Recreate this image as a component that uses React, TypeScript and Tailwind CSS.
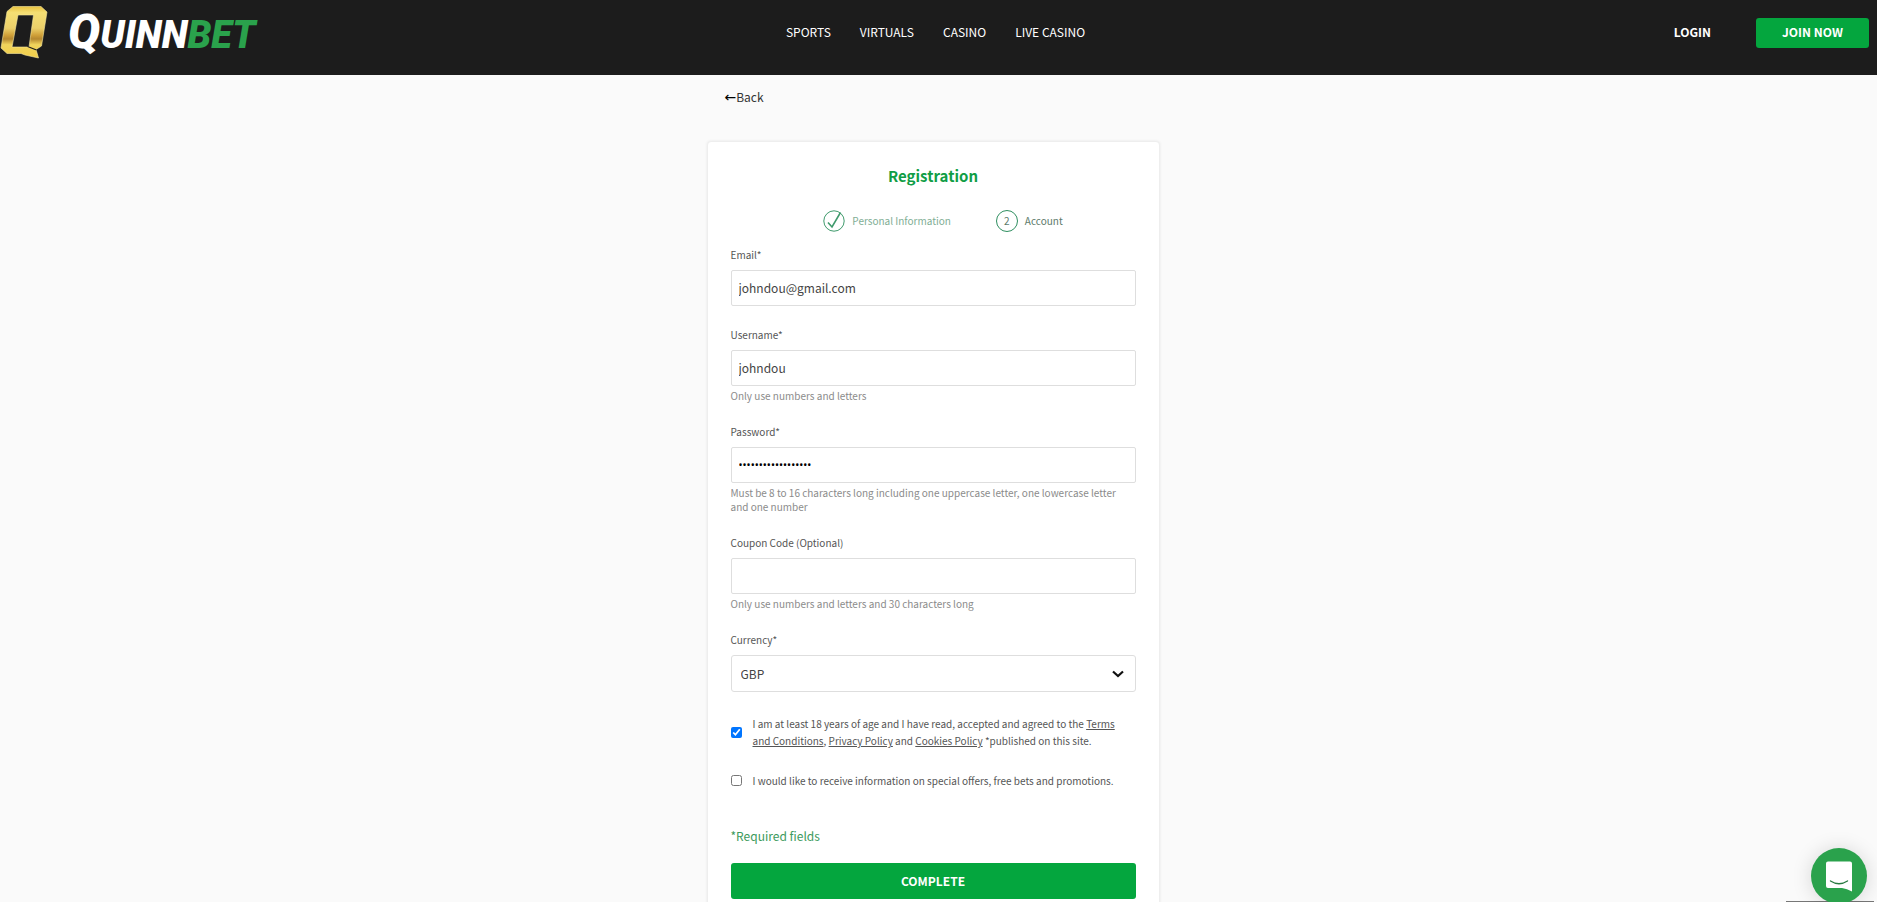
import React from "react";

const navItems = ["SPORTS", "VIRTUALS", "CASINO", "LIVE CASINO"];

function Emblem() {
  return (
    <svg viewBox="0 0 48 54" className="h-[54px] w-12" aria-hidden="true">
      <defs>
        <linearGradient id="gold" x1="0" y1="0" x2="0" y2="1">
          <stop offset="0" stopColor="#e9c23f" />
          <stop offset="0.12" stopColor="#f5df74" />
          <stop offset="0.42" stopColor="#ecd06a" />
          <stop offset="0.56" stopColor="#cf9f38" />
          <stop offset="0.63" stopColor="#b58830" />
          <stop offset="0.74" stopColor="#f0d35c" />
          <stop offset="1" stopColor="#f2cf4a" />
        </linearGradient>
      </defs>
      <path
        fill="url(#gold)"
        stroke="#f8e9a0"
        strokeWidth="0.6"
        fillRule="evenodd"
        d="M13 1.500H41L47 7L41.500 41L36 44.500L38.500 53L25 50L21 48.500H7L1 43L7 6.500ZM18 10L12 42H26L29 42L33.500 10Z"
      />
      <path d="M27.500 41.500L36.500 45" stroke="#1c1c1c" strokeWidth="1.2" />
    </svg>
  );
}

function Logo() {
  return (
    <a href="#" className="flex items-start gap-5" aria-label="QuinnBet">
      <Emblem />
      <span className="font-[Roboto,sans-serif] text-[38px] leading-[54px] font-black whitespace-nowrap text-white italic">
        <span className="text-[48px]">Q</span>UINN
        <span className="text-[#2aa24c]">BET</span>
      </span>
    </a>
  );
}

function Header() {
  return (
    <header className="grid h-[75px] grid-cols-[1fr_auto_1fr] items-start bg-[#1c1c1c] text-[12px] text-white">
      <div className="pt-[5px]">
        <Logo />
      </div>
      <nav className="mr-1.5 flex gap-[29px] pt-[22px] leading-5">
        {navItems.map((item) => (
          <a key={item} href="#">
            {item}
          </a>
        ))}
      </nav>
      <div className="flex items-center justify-end gap-[45px] pt-[18px] pr-2 font-bold">
        <button type="button" className="pb-0.5">
          LOGIN
        </button>
        <button type="button" className="h-[30px] w-[113px] rounded-[3px] bg-[#04a63e] pb-0.5">
          JOIN NOW
        </button>
      </div>
    </header>
  );
}

const inputClass =
  "block h-9 w-full rounded-[2px] border border-[#dedede] bg-white px-[7px] pb-0.5 text-[12px] text-[#444] outline-none";

function Field({
  id,
  label,
  hint,
  children,
}: {
  id: string;
  label: string;
  hint?: string;
  children: React.ReactNode;
}) {
  return (
    <div>
      <label htmlFor={id} className="mb-2 block">
        {label}
      </label>
      {children}
      {hint && <p className="mt-[3px] text-[#8b8b8b]">{hint}</p>}
    </div>
  );
}

function Steps() {
  return (
    <ol className="mt-[22px] mb-4 flex justify-center gap-[45px] pl-5">
      <li className="flex items-center gap-[7px] text-[#7fae95]">
        <svg viewBox="0 0 22 22" className="size-[22px]" fill="none" stroke="#3f9a6c" aria-hidden="true">
          <circle cx="11" cy="11" r="10.2" />
          <path d="M5 12.500L9 17L17.500 2.500" strokeWidth="1.6" />
        </svg>
        Personal Information
      </li>
      <li className="flex items-center gap-[7px] text-[#5d7a6b]">
        <span className="flex size-[22px] items-center justify-center rounded-full border border-[#2f8f60]">
          2
        </span>
        Account
      </li>
    </ol>
  );
}

function RegistrationForm() {
  return (
    <form
      className="rounded-[4px] border border-[#eee] bg-white px-[23px] pt-[22px] pb-10 text-[10px] leading-[14px] text-[#555] shadow-[0_0_3px_rgba(0,0,0,0.08)]"
      onSubmit={(e) => e.preventDefault()}
    >
      <h1 className="text-center text-[15px] leading-6 font-bold text-[#0f9d45]">Registration</h1>
      <Steps />
      <div className="flex flex-col gap-[22px]">
        <Field id="email" label="Email*">
          <input id="email" type="email" defaultValue="johndou@gmail.com" className={inputClass} />
        </Field>
        <Field id="username" label="Username*" hint="Only use numbers and letters">
          <input id="username" type="text" defaultValue="johndou" className={inputClass} />
        </Field>
        <Field
          id="password"
          label="Password*"
          hint="Must be 8 to 16 characters long including one uppercase letter, one lowercase letter and one number"
        >
          <input
            id="password"
            type="password"
            defaultValue="Johndou12345678901"
            className="block h-9 w-full rounded-[2px] border border-[#dedede] bg-white px-[7px] font-[Roboto,sans-serif] text-[12px] text-black outline-none"
          />
        </Field>
        <Field
          id="coupon"
          label="Coupon Code (Optional)"
          hint="Only use numbers and letters and 30 characters long"
        >
          <input id="coupon" type="text" className={inputClass} />
        </Field>
        <Field id="currency" label="Currency*">
          <div className="relative">
            <select
              id="currency"
              className="block h-[37px] w-full appearance-none rounded-[3px] border border-[#dedede] bg-white px-[9px] text-[12px] text-[#444]"
            >
              <option>GBP</option>
            </select>
            <svg
              viewBox="0 0 12 8"
              className="pointer-events-none absolute top-[15px] right-3 h-2 w-3"
              fill="none"
              stroke="#111"
              strokeWidth="2.200"
              aria-hidden="true"
            >
              <path d="M1 1.500L6 6L11 1.500" />
            </svg>
          </div>
        </Field>
      </div>
      <div className="mt-[23px] flex flex-col gap-[23px] pr-2">
        <div className="flex items-center gap-[11px] leading-[17px]">
          <input id="terms" type="checkbox" defaultChecked className="size-[11px] shrink-0" />
          <label htmlFor="terms">
            I am at least 18 years of age and I have read, accepted and agreed to the{" "}
            <a href="#" className="underline">
              Terms and Conditions
            </a>
            ,{" "}
            <a href="#" className="underline">
              Privacy Policy
            </a>{" "}
            and{" "}
            <a href="#" className="underline">
              Cookies Policy
            </a>{" "}
            *published on this site.
          </label>
        </div>
        <div className="flex items-center gap-[11px] leading-[17px]">
          <input id="offers" type="checkbox" className="size-[11px] shrink-0" />
          <label htmlFor="offers">
            I would like to receive information on special offers, free bets and promotions.
          </label>
        </div>
      </div>
      <p className="mt-[37px] mb-[17px] text-[12px] leading-5 text-[#3c9a5c]">*Required fields</p>
      <button
        type="submit"
        className="h-9 w-full rounded-[3px] bg-[#04a63e] text-[12px] font-bold text-white"
      >
        COMPLETE
      </button>
    </form>
  );
}

function ChatLauncher() {
  return (
    <>
      <div className="fixed right-[3px] bottom-0 h-px w-[88px] bg-[#777]" />
      <button
        type="button"
        aria-label="Open chat"
        className="fixed right-[10px] bottom-[-2px] flex size-14 items-center justify-center rounded-full bg-[#2aa24c] shadow-[0_1px_20px_rgba(0,0,0,0.15)]"
      >
        <svg viewBox="0 0 28 32" className="h-8 w-7" aria-hidden="true">
          <path fill="#fff" d="M3 1.500H25Q27 1.500 27 3.500V31.500Q22 28.500 17 28H3Q1 28 1 26V3.500Q1 1.500 3 1.500Z" />
          <path
            d="M5.500 21Q14 26.500 22.500 21"
            fill="none"
            stroke="#2a7a42"
            strokeWidth="1.400"
            strokeLinecap="round"
          />
        </svg>
      </button>
    </>
  );
}

export default function App() {
  return (
    <div className="min-h-screen bg-[#fafafa] font-['Noto_Sans_CJK_SC','Open_Sans',sans-serif]">
      <Header />
      <div className="pr-[11px]">
        <main className="mx-auto w-full max-w-[453px] pt-3">
          <a href="#" className="ml-[18px] flex w-fit items-center text-[12px] leading-5 text-[#333]">
            <span className="font-['DejaVu_Sans',sans-serif] text-[14px] text-black">←</span>
            Back
          </a>
          <div className="mt-[34px]">
            <RegistrationForm />
          </div>
        </main>
      </div>
      <ChatLauncher />
    </div>
  );
}
